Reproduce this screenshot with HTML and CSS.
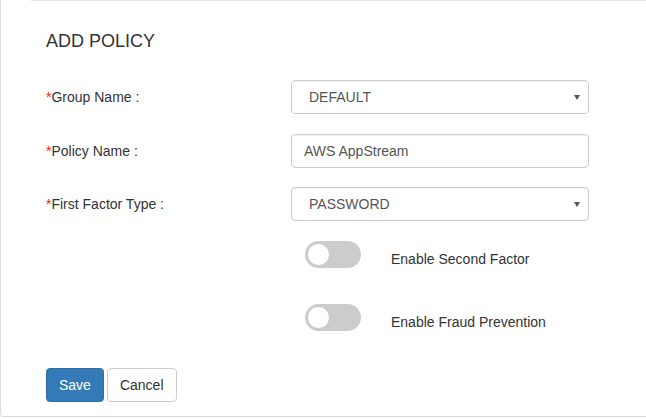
FILE: index.html
```html
<!DOCTYPE html>
<html>
<head>
<meta charset="utf-8">
<link rel="stylesheet" href="styles.css">
</head>
<body>
<div class="card">
  <div class="topline"></div>
  <div class="card-body">
    <h3 class="title">ADD POLICY</h3>
    <div class="row">
      <label class="label"><span class="req">*</span>Group Name :</label>
      <div class="control select"><span>DEFAULT</span><span class="caret"></span></div>
    </div>
    <div class="row">
      <label class="label"><span class="req">*</span>Policy Name :</label>
      <div class="control input">AWS AppStream</div>
    </div>
    <div class="row">
      <label class="label"><span class="req">*</span>First Factor Type :</label>
      <div class="control select"><span>PASSWORD</span><span class="caret"></span></div>
    </div>
    <div class="switch-row first">
      <div class="switch"><div class="knob"></div></div>
      <span class="switch-label">Enable Second Factor</span>
    </div>
    <div class="switch-row">
      <div class="switch"><div class="knob"></div></div>
      <span class="switch-label">Enable Fraud Prevention</span>
    </div>
    <div class="actions">
      <button class="btn btn-primary">Save</button>
      <button class="btn btn-default">Cancel</button>
    </div>
  </div>
</div>
</body>
</html>
```
FILE: styles.css
```css
html, body {
  margin: 0;
  padding: 0;
  background: #fff;
}
body {
  font-family: "Liberation Sans", Arial, sans-serif;
  font-size: 14px;
  color: #333;
}
.card {
  box-sizing: border-box;
  height: 417px;
  border-left: 1px solid #dcdcdc;
  border-bottom: 1px solid #d8d8d8;
  border-radius: 0 0 0 4px;
  box-shadow: 0 1px 2px rgba(0,0,0,0.08);
}
.topline {
  margin-left: 30px;
  height: 0;
  border-top: 1px solid #e6e6e6;
}
.card-body {
  padding-left: 45px;
}
.title {
  margin: 30px 0 0 0;
  font-size: 18px;
  line-height: 20px;
  font-weight: normal;
  color: #333;
}
.row {
  display: flex;
  align-items: center;
  height: 34px;
}
.row + .row { margin-top: 19.5px; }
.title + .row { margin-top: 29px; }
.label {
  width: 245px;
  flex: none;
  line-height: 20px;
}
.req { color: #e8231c; }
.control {
  box-sizing: border-box;
  width: 298px;
  height: 34px;
  border: 1px solid #ccc;
  border-radius: 4px;
  color: #555;
  display: flex;
  align-items: center;
  box-shadow: inset 0 1px 1px rgba(0,0,0,0.04);
}
.input { padding: 0 12px; }
.select {
  padding: 0 6px 0 17px;
  justify-content: space-between;
}
.caret {
  width: 0;
  height: 0;
  border-left: 3px solid transparent;
  border-right: 3px solid transparent;
  border-top: 5px solid #555;
  margin-right: 2px;
}
.switch-row {
  display: flex;
  align-items: flex-start;
  margin-left: 259px;
  height: 27px;
  margin-top: 36px;
}
.switch-row.first { margin-top: 20px; }
.switch {
  position: relative;
  width: 56px;
  height: 27px;
  border-radius: 14px;
  background: #ccc;
  flex: none;
}
.knob {
  position: absolute;
  top: 3px;
  left: 3px;
  width: 21px;
  height: 21px;
  border-radius: 50%;
  background: #fff;
}
.switch-label {
  margin-left: 30px;
  padding-top: 8px;
  line-height: 20px;
  color: #333;
}
.actions {
  margin-top: 37px;
  display: flex;
  gap: 3px;
}
.btn {
  font-family: "Liberation Sans", Arial, sans-serif;
  font-size: 14px;
  line-height: 20px;
  padding: 6px 12px;
  border-radius: 4px;
  border: 1px solid #ccc;
  margin: 0;
}
.btn-primary {
  background: #337ab7;
  border-color: #2e6da4;
  color: #fff;
}
.btn-default {
  background: #fff;
  color: #333;
}
```
